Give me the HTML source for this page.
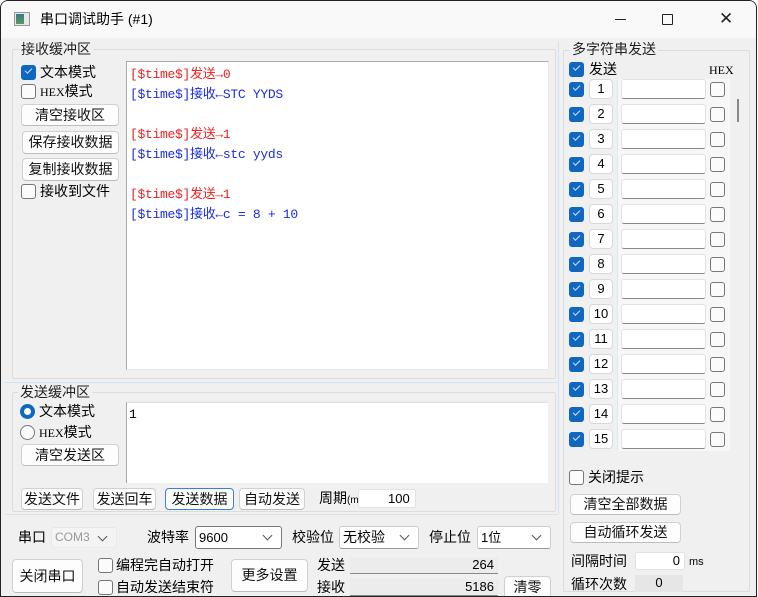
<!DOCTYPE html>
<html><head><meta charset="utf-8"><style>
*{box-sizing:border-box;margin:0;padding:0}
body{width:758px;height:597px;background:#fff;font-family:"Liberation Sans","Noto Sans CJK SC",sans-serif;font-size:14px;color:#000;position:relative;overflow:hidden}
.win{position:absolute;left:0;top:0;width:757px;height:597px;background:#f0f0f0;border:1px solid #222;border-radius:8px 8px 0 0;overflow:hidden}
.tb{position:absolute;left:0;top:0;width:100%;height:37px;background:#f9f9f9}
.a{position:absolute;white-space:nowrap;line-height:17px}
.grp{position:absolute;border:1px solid #dcdcdc;border-radius:2px}
.lbl{position:absolute;background:#f0f0f0;padding:0 2px;font-size:14px;line-height:16px;color:#222}
.btn{position:absolute;background:#fdfdfd;border:1px solid #d0d0d0;border-radius:4px;text-align:center;font-size:14px;color:#111;border-bottom-color:#bcbcbc;white-space:nowrap}
.cb{position:absolute;width:15px;height:15px;border:1px solid #777;border-radius:3px;background:#fbfbfb}
.cbc{position:absolute;width:15px;height:15px;border-radius:3px;background:#0f67c0}
.cbc:after{content:"";position:absolute;left:4px;top:3px;width:6px;height:3px;border-left:1.3px solid #cfe0f3;border-bottom:1.3px solid #cfe0f3;transform:rotate(-45deg)}
.ta{position:absolute;background:#fff;border:1px solid #aaa;border-right-color:#e8e8e8;border-bottom-color:#e8e8e8}
.mono{font-family:"Liberation Mono","Noto Sans CJK SC",monospace;font-size:13px;letter-spacing:-0.3px}
.inp{position:absolute;background:#fff;border:1px solid #e2e2e2;border-bottom:1px solid #888;border-radius:3px}
.combo{position:absolute;background:#fff;border:1px solid #ccc;border-bottom-color:#999;border-radius:3px;font-size:13px;padding-left:3px;line-height:19px}
.combo:after{content:"";position:absolute;right:10px;top:5px;width:6px;height:6px;border-right:1px solid #555;border-bottom:1px solid #555;transform:rotate(45deg)}
.num{position:absolute;width:24px;height:20px;background:#fff;border:1px solid #d8d8d8;border-radius:4px;text-align:center;font-size:13px;line-height:18px}
</style></head><body><div class="win">
<div class="tb">
 <div class="a" style="left:13px;top:11px;width:16px;height:14px;border:1px solid #999;background:#e8e8e8"><div style="position:absolute;left:1px;top:1px;width:8px;height:10px;background:linear-gradient(#3a7a8a,#5a9a5a)"></div></div>
 <div class="a" style="left:39px;top:10px;font-size:14px">串口调试助手 (#1)</div>
 <div class="a" style="left:614px;top:18px;width:11px;height:1px;background:#222"></div>
 <div class="a" style="left:661px;top:13px;width:11px;height:11px;border:1px solid #222;border-radius:1px"></div>
 <div class="a" style="left:718px;top:9px;font-size:17px;font-weight:300;color:#222">✕</div>
</div>
<div class="a" style="left:557px;top:40px;width:1px;height:473px;background:#cfe3f3"></div>
<div class="a" style="left:4px;top:381px;width:553px;height:1px;background:#cfe3f3"></div>
<div class="a" style="left:4px;top:513px;width:553px;height:1px;background:#e0e0e0"></div>

<div class="grp" style="left:11px;top:48px;width:544px;height:330px"></div>
<div class="lbl" style="left:18px;top:40px">接收缓冲区</div>
<div class="cbc" style="left:20px;top:64px"></div><div class="a" style="left:39px;top:63px">文本模式</div>
<div class="cb" style="left:20px;top:83px"></div><div class="a" style="left:39px;top:82px"><span style="font-family:'Liberation Serif';font-size:12px">HEX</span>模式</div>
<div class="btn" style="left:20px;top:103px;width:98px;height:22px;line-height:20px">清空接收区</div>
<div class="btn" style="left:21px;top:130px;width:97px;height:23px;line-height:21px">保存接收数据</div>
<div class="btn" style="left:21px;top:157px;width:97px;height:23px;line-height:21px">复制接收数据</div>
<div class="cb" style="left:20px;top:183px"></div><div class="a" style="left:39px;top:182px">接收到文件</div>
<div class="ta mono" style="left:125px;top:60px;width:423px;height:309px;padding:3px 0 0 3px;line-height:20px">
<div style="color:#f02020">[$time$]发送→0</div>
<div style="color:#1a2ce0">[$time$]接收←STC YYDS</div>
<div>&nbsp;</div>
<div style="color:#f02020">[$time$]发送→1</div>
<div style="color:#1a2ce0">[$time$]接收←stc yyds</div>
<div>&nbsp;</div>
<div style="color:#f02020">[$time$]发送→1</div>
<div style="color:#1a2ce0">[$time$]接收←c = 8 + 10</div>
</div>

<div class="grp" style="left:11px;top:391px;width:544px;height:120px"></div>
<div class="lbl" style="left:17px;top:383px">发送缓冲区</div>
<div class="a" style="left:19px;top:403px;width:15px;height:15px;border-radius:50%;background:#0f67c0"><div style="position:absolute;left:4px;top:4px;width:7px;height:7px;border-radius:50%;background:#fff"></div></div>
<div class="a" style="left:38px;top:402px">文本模式</div>
<div class="a" style="left:19px;top:424px;width:15px;height:15px;border-radius:50%;border:1px solid #777;background:#fbfbfb"></div>
<div class="a" style="left:38px;top:423px"><span style="font-family:'Liberation Serif';font-size:12px">HEX</span>模式</div>
<div class="btn" style="left:20px;top:443px;width:98px;height:22px;line-height:20px">清空发送区</div>
<div class="ta mono" style="left:125px;top:401px;width:422px;height:81px;padding:3px 0 0 2px;line-height:18px;border:none;border-left:1px solid #aaa;border-top:1px solid #ddd">1</div>
<div class="btn" style="left:20px;top:487px;width:62px;height:22px;line-height:20px">发送文件</div>
<div class="btn" style="left:92px;top:487px;width:63px;height:22px;line-height:20px">发送回车</div>
<div class="btn" style="left:164px;top:487px;width:69px;height:22px;line-height:20px;border:1px solid #3a82d0">发送数据</div>
<div class="btn" style="left:238px;top:487px;width:66px;height:22px;line-height:20px">自动发送</div>
<div class="a" style="left:318px;top:489px;font-size:14px">周期<span style="font-size:10px">(ms)</span></div>
<div class="inp" style="left:357px;top:488px;width:58px;height:19px;font-size:13px;line-height:17px;padding-left:29px;border-bottom-color:#e2e2e2">100</div>

<div class="a" style="left:17px;top:528px">串口</div>
<div class="combo" style="left:50px;top:526px;width:66px;height:21px;background:#f4f4f4;border-color:#e8e8e8;color:#999;font-size:12px">COM3</div>
<div class="a" style="left:146px;top:528px">波特率</div>
<div class="combo" style="left:194px;top:525px;width:87px;height:23px;border:1px solid #777;line-height:21px">9600</div>
<div class="a" style="left:291px;top:528px">校验位</div>
<div class="combo" style="left:338px;top:525px;width:80px;height:23px;font-size:14px;line-height:21px">无校验</div>
<div class="a" style="left:428px;top:528px">停止位</div>
<div class="combo" style="left:476px;top:525px;width:74px;height:23px;line-height:21px">1位</div>
<div class="btn" style="left:11px;top:558px;width:71px;height:34px;line-height:32px">关闭串口</div>
<div class="cb" style="left:97px;top:557px"></div><div class="a" style="left:115px;top:556px">编程完自动打开</div>
<div class="cb" style="left:97px;top:579px"></div><div class="a" style="left:115px;top:578px">自动发送结束符</div>
<div class="btn" style="left:230px;top:558px;width:77px;height:33px;line-height:31px">更多设置</div>
<div class="a" style="left:316px;top:556px">发送</div>
<div class="a" style="left:349px;top:556px;width:148px;height:17px;background:#ececec;border-bottom:1px solid #888;font-size:13px;text-align:right;padding-right:4px;line-height:16px">264</div>
<div class="a" style="left:316px;top:578px">接收</div>
<div class="a" style="left:349px;top:578px;width:148px;height:17px;background:#ececec;border-bottom:1px solid #888;font-size:13px;text-align:right;padding-right:4px;line-height:16px">5186</div>
<div class="btn" style="left:503px;top:575px;width:47px;height:22px;line-height:20px">清零</div>

<div class="grp" style="left:562px;top:49px;width:187px;height:542px"></div>
<div class="lbl" style="left:569px;top:40px">多字符串发送</div>
<div class="a" style="left:616px;top:78px;width:113px;height:372px;background:#f7f7f7"></div>
<div class="a" style="left:616px;top:78px;width:1px;height:372px;background:#d8e8f5"></div>
<div class="cbc" style="left:568px;top:61px"></div><div class="a" style="left:588px;top:60px">发送</div>
<div class="a" style="left:708px;top:61px;font-family:'Liberation Serif';font-size:12px">HEX</div>
<div class="a" style="left:736px;top:98px;width:2px;height:23px;background:#888"></div>
<div id="rows"></div>
<div class="cb" style="left:568px;top:469px"></div><div class="a" style="left:587px;top:468px">关闭提示</div>
<div class="btn" style="left:569px;top:493px;width:111px;height:21px;line-height:19px">清空全部数据</div>
<div class="btn" style="left:569px;top:521px;width:111px;height:21px;line-height:19px">自动循环发送</div>
<div class="a" style="left:570px;top:552px">间隔时间</div>
<div class="inp" style="left:634px;top:551px;width:50px;height:18px;font-size:13px;text-align:right;padding-right:4px;line-height:16px;border-bottom-color:#e2e2e2">0</div>
<div class="a" style="left:688px;top:553px;font-size:11px">ms</div>
<div class="a" style="left:570px;top:575px">循环次数</div>
<div class="a" style="left:634px;top:574px;width:48px;height:17px;background:#e6e6e6;font-size:13px;text-align:center;line-height:16px">0</div>
<script>
var h='';for(var i=1;i<=15;i++){var y=88+(i-1)*25;
h+='<div class="cbc" style="left:568px;top:'+(y-7)+'px"></div>';
h+='<div class="num" style="left:588px;top:'+(y-10)+'px">'+i+'</div>';
h+='<div class="inp" style="left:620px;top:'+(y-10)+'px;width:85px;height:20px"></div>';
h+='<div class="cb" style="left:709px;top:'+(y-7)+'px"></div>';}
document.getElementById('rows').outerHTML=h;
</script>
</div></body></html>
